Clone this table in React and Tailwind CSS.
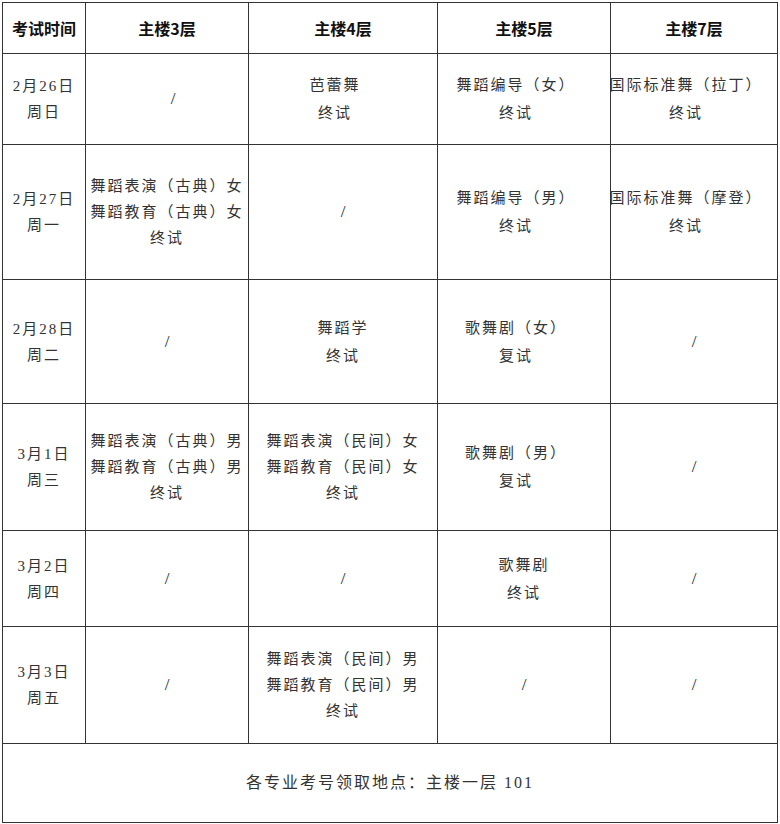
const F = { fontFamily: '"Liberation Serif", "Noto Sans CJK SC", serif' }

// s: shift text block left (as in the source doc), r: slash nudged right
const rows = [
  { h: 'h-[91px]', d: ['2月26日', '周日'], c: [{ t: ['/'], r: true }, { t: ['芭蕾舞', '终试'], s: true }, { t: ['舞蹈编导（女）', '终试'], s: true }, { t: ['国际标准舞（拉丁）', '终试'], s: true }] },
  { h: 'h-[135px]', d: ['2月27日', '周一'], c: [{ t: ['舞蹈表演（古典）女', '舞蹈教育（古典）女', '终试'] }, { t: ['/'] }, { t: ['舞蹈编导（男）', '终试'], s: true }, { t: ['国际标准舞（摩登）', '终试'], s: true }] },
  { h: 'h-[124px]', d: ['2月28日', '周二'], c: [{ t: ['/'] }, { t: ['舞蹈学', '终试'] }, { t: ['歌舞剧（女）', '复试'], s: true }, { t: ['/'] }] },
  { h: 'h-[127px]', d: ['3月1日', '周三'], c: [{ t: ['舞蹈表演（古典）男', '舞蹈教育（古典）男', '终试'] }, { t: ['舞蹈表演（民间）女', '舞蹈教育（民间）女', '终试'] }, { t: ['歌舞剧（男）', '复试'], s: true }, { t: ['/'] }] },
  { h: 'h-[96px]', d: ['3月2日', '周四'], c: [{ t: ['/'] }, { t: ['/'] }, { t: ['歌舞剧', '终试'] }, { t: ['/'] }] },
  { h: 'h-[117px]', d: ['3月3日', '周五'], c: [{ t: ['/'] }, { t: ['舞蹈表演（民间）男', '舞蹈教育（民间）男', '终试'] }, { t: ['/'] }, { t: ['/'] }] },
]

const heads = ['考试时间', '主楼3层', '主楼4层', '主楼5层', '主楼7层']

function Cell({ cell }) {
  const lead = cell.t.length > 2 ? 'leading-[26px]' : 'leading-[28px]'
  return (
    <div className={`flex flex-col items-center justify-center border-r border-b border-[#333] whitespace-nowrap ${cell.s ? 'pr-[16px]' : ''} ${cell.r ? 'pl-[12px]' : ''}`}>
      {cell.t.map((t, i) =>
        t === '/' ? (
          <span key={i} className="text-[17px] text-[#223]">/</span>
        ) : (
          <span key={i} className={`text-[15px] tracking-[2px] text-[#333] ${lead}`}>{t}</span>
        )
      )}
    </div>
  )
}

export default function App() {
  return (
    <div className="bg-white w-[780px] h-[824px] pt-[2px] pl-[2px]" style={F}>
      <div className="w-[776px] border-t border-l border-[#333] grid grid-cols-[83px_163px_189px_173px_167px]">
        {heads.map((h) => (
          <div key={h} className="h-[51px] flex items-center justify-center border-r border-b border-[#333] text-[16px] font-bold text-[#111]" style={{ fontFamily: '"Noto Sans CJK SC", "Liberation Sans", sans-serif' }}>
            {h}
          </div>
        ))}
        {rows.map((r, i) => (
          <div key={i} className="contents">
            <div className={`${r.h} flex flex-col items-center justify-center border-r border-b border-[#333]`}>
              {r.d.map((t) => (
                <span key={t} className="text-[15px] tracking-[2px] leading-[26px] text-[#333]">{t}</span>
              ))}
            </div>
            {r.c.map((c, j) => (
              <Cell key={j} cell={c} />
            ))}
          </div>
        ))}
        <div className="col-span-5 h-[79px] flex items-center justify-center border-r border-b border-[#333] text-[16px] tracking-[2px] text-[#333]">
          各专业考号领取地点：主楼一层 101
        </div>
      </div>
    </div>
  )
}
